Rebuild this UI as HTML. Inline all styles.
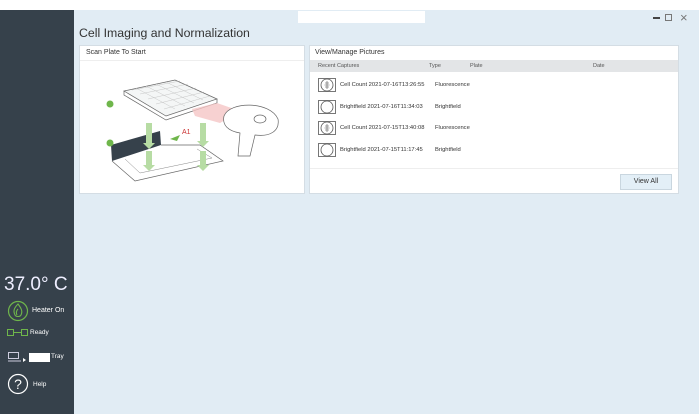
<!DOCTYPE html>
<html><head><style>
*{margin:0;padding:0;box-sizing:border-box}
body{width:699px;height:414px;overflow:hidden;font-family:"Liberation Sans",sans-serif;background:#e1ecf4;position:relative}
.top{position:absolute;left:0;top:0;width:699px;height:10px;background:#fff}
.side{position:absolute;left:0;top:10px;width:74px;height:404px;background:#36414b;color:#fff}
.t{position:absolute;font-size:10px;color:#333;white-space:nowrap}
.panel{position:absolute;background:#fff;border:1px solid #d4dde4}
</style></head><body>
<div class="top"></div>
<div style="position:absolute;left:298px;top:11px;width:127px;height:12px;background:#fff"></div>
<div style="position:absolute;left:653px;top:17px;width:7px;height:2px;background:#444"></div>
<div style="position:absolute;left:665px;top:14px;width:7px;height:7px;border:1px solid #777"></div>
<div class="t" style="left:680px;top:10px;font-size:13px;color:#777">×</div>
<div class="side">
 <div style="position:absolute;left:4px;top:264px;font-size:19px;font-weight:300;color:#eef">37.0° C</div>
 <svg style="position:absolute;left:7px;top:290px" width="22" height="22"><circle cx="11" cy="11" r="9.5" fill="none" stroke="#6fb64b" stroke-width="1.2"/><path d="M11 4c-4 4-5 7-3 11 1 2 5 2 6 0 2-4 0-7-3-11z M11 9c-2 2-2 4-1 6" fill="none" stroke="#6fb64b" stroke-width="1.1"/></svg>
 <div class="t" style="left:32px;top:297px;color:#fff;font-size:7px">Heater On</div>
 <svg style="position:absolute;left:7px;top:319px" width="22" height="8"><rect x="0.5" y="0.5" width="6" height="6" fill="none" stroke="#6fb64b"/><rect x="14.5" y="0.5" width="6" height="6" fill="none" stroke="#6fb64b"/><line x1="7" y1="3.5" x2="14" y2="3.5" stroke="#6fb64b"/></svg>
 <div class="t" style="left:30px;top:319px;color:#fff;font-size:6.5px">Ready</div>
 <svg style="position:absolute;left:8px;top:342px" width="20" height="12"><rect x="0.5" y="0.5" width="10" height="6" fill="none" stroke="#ccd" /><line x1="0" y1="9" x2="13" y2="9" stroke="#ccd"/><path d="M15 6l3 2-3 2z" fill="#fff"/></svg>
 <div style="position:absolute;left:29px;top:343px;width:21px;height:9px;background:#fff"></div>
 <div class="t" style="left:51px;top:343px;color:#fff;font-size:6.5px">Tray</div>
 <svg style="position:absolute;left:7px;top:363px" width="22" height="22"><circle cx="11" cy="11" r="9.5" fill="none" stroke="#fff" stroke-width="1.2"/><text x="11" y="16" fill="#fff" font-size="14" text-anchor="middle" font-family="Liberation Sans">?</text></svg>
 <div class="t" style="left:33px;top:371px;color:#fff;font-size:6.5px">Help</div>
</div>
<div class="t" style="left:79px;top:26px;font-size:12.3px;color:#333">Cell Imaging and Normalization</div>
<div class="panel" style="left:79px;top:45px;width:226px;height:149px">
 <div class="t" style="left:6px;top:3px;font-size:7px">Scan Plate To Start</div>
 <div style="position:absolute;left:0;top:14px;width:224px;height:1px;background:#eee"></div>
 <svg style="position:absolute;left:0;top:15px" width="224" height="132">
  <path d="M44 30 L95 19 L137 38 L86 55 Z" fill="#f4f6f6" stroke="#666" stroke-width=".7"/>
  <path d="M44 30 L44 34 L86 59 L137 42 L137 38" fill="none" stroke="#666" stroke-width=".7"/>
  <g stroke="#bbb" stroke-width=".4"><path d="M52 29 L100 20 M60 33 L108 23 M68 38 L116 27 M76 43 L124 31 M84 48 L130 35"/><path d="M56 27 L95 48 M66 25 L105 45 M76 23 L114 42 M86 21 L123 39"/></g>
  <path d="M112 48 L137 42 L160 50 L140 62 L115 55 Z" fill="#f5c6c6" opacity=".8"/>
  <path d="M144 55 C150 40 190 40 198 58 C200 70 190 76 175 74 L170 95 L158 95 L160 72 C148 70 142 64 144 55Z" fill="#fff" stroke="#666" stroke-width=".7"/>
  <ellipse cx="180" cy="58" rx="6" ry="4" fill="none" stroke="#666" stroke-width=".7"/>
  <path d="M31 84 L80 70 L81 84 L32 100 Z" fill="#36414b"/>
  <path d="M32 100 L55 120 L143 100 L120 84 L81 84" fill="none" stroke="#666" stroke-width=".7"/>
  <path d="M45 98 L60 112 L132 97 L117 88" fill="none" stroke="#888" stroke-width=".5"/>
  <path d="M90 78 L100 74 L97 80 Z" fill="#6fb64b"/>
  <text x="102" y="73" fill="#c33" font-size="7">A1</text>
  <g fill="#b7dca4"><path d="M66 62 h6 v20 h3 l-6 6 -6-6 h3z"/><path d="M66 90 h6 v14 h3 l-6 6 -6-6 h3z"/><path d="M120 62 h6 v18 h3 l-6 6 -6-6 h3z"/><path d="M120 90 h6 v14 h3 l-6 6 -6-6 h3z"/></g>
  <circle cx="30" cy="43" r="3.5" fill="#6fb64b"/><circle cx="30" cy="82" r="3.5" fill="#6fb64b"/>
 </svg>
</div>
<div class="panel" style="left:309px;top:45px;width:370px;height:149px">
 <div class="t" style="left:5px;top:3px;font-size:7px">View/Manage Pictures</div>
 <div style="position:absolute;left:0;top:14px;width:368px;height:12px;background:#e3e5e7"></div>
 <div class="t" style="left:8px;top:17px;font-size:5.5px;color:#555">Recent Captures</div>
 <div class="t" style="left:119px;top:17px;font-size:5.5px;color:#555">Type</div>
 <div class="t" style="left:160px;top:17px;font-size:5.5px;color:#555">Plate</div>
 <div class="t" style="left:283px;top:17px;font-size:5.5px;color:#555">Date</div>
 <div id="rows"></div>
 <div style="position:absolute;left:0;top:122px;width:368px;height:1px;background:#eee"></div>
 <div style="position:absolute;left:310px;top:128px;width:52px;height:16px;background:#e3eff7;border:1px solid #c9d6df;font-size:7px;color:#333;text-align:center;line-height:14px">View All</div>
</div>
<script>
var r=[["Cell Count 2021-07-16T13:26:55","Fluorescence",1],["Brightfield 2021-07-16T11:34:03","Brightfield",0],["Cell Count 2021-07-15T13:40:08","Fluorescence",1],["Brightfield 2021-07-15T11:17:45","Brightfield",0]],h="";
r.forEach(function(x,i){var y=32+i*21.5;
h+='<svg style="position:absolute;left:8px;top:'+y+'px" width="18" height="14"><rect x="0.5" y="0.5" width="17" height="13" fill="none" stroke="#555" stroke-width=".8"/><circle cx="9" cy="7" r="6" fill="#fff" stroke="#555" stroke-width=".8"/>'+(x[2]?'<path d="M9 3v8M7 5h4M6.5 7h5M7 9h4" stroke="#555" stroke-width=".6"/>':'')+'</svg>';
h+='<div class="t" style="left:30px;top:'+(y+4)+'px;font-size:5.8px">'+x[0]+'</div><div class="t" style="left:125px;top:'+(y+4)+'px;font-size:5.8px">'+x[1]+'</div>';});
document.getElementById('rows').innerHTML=h;
</script>
</body></html>
